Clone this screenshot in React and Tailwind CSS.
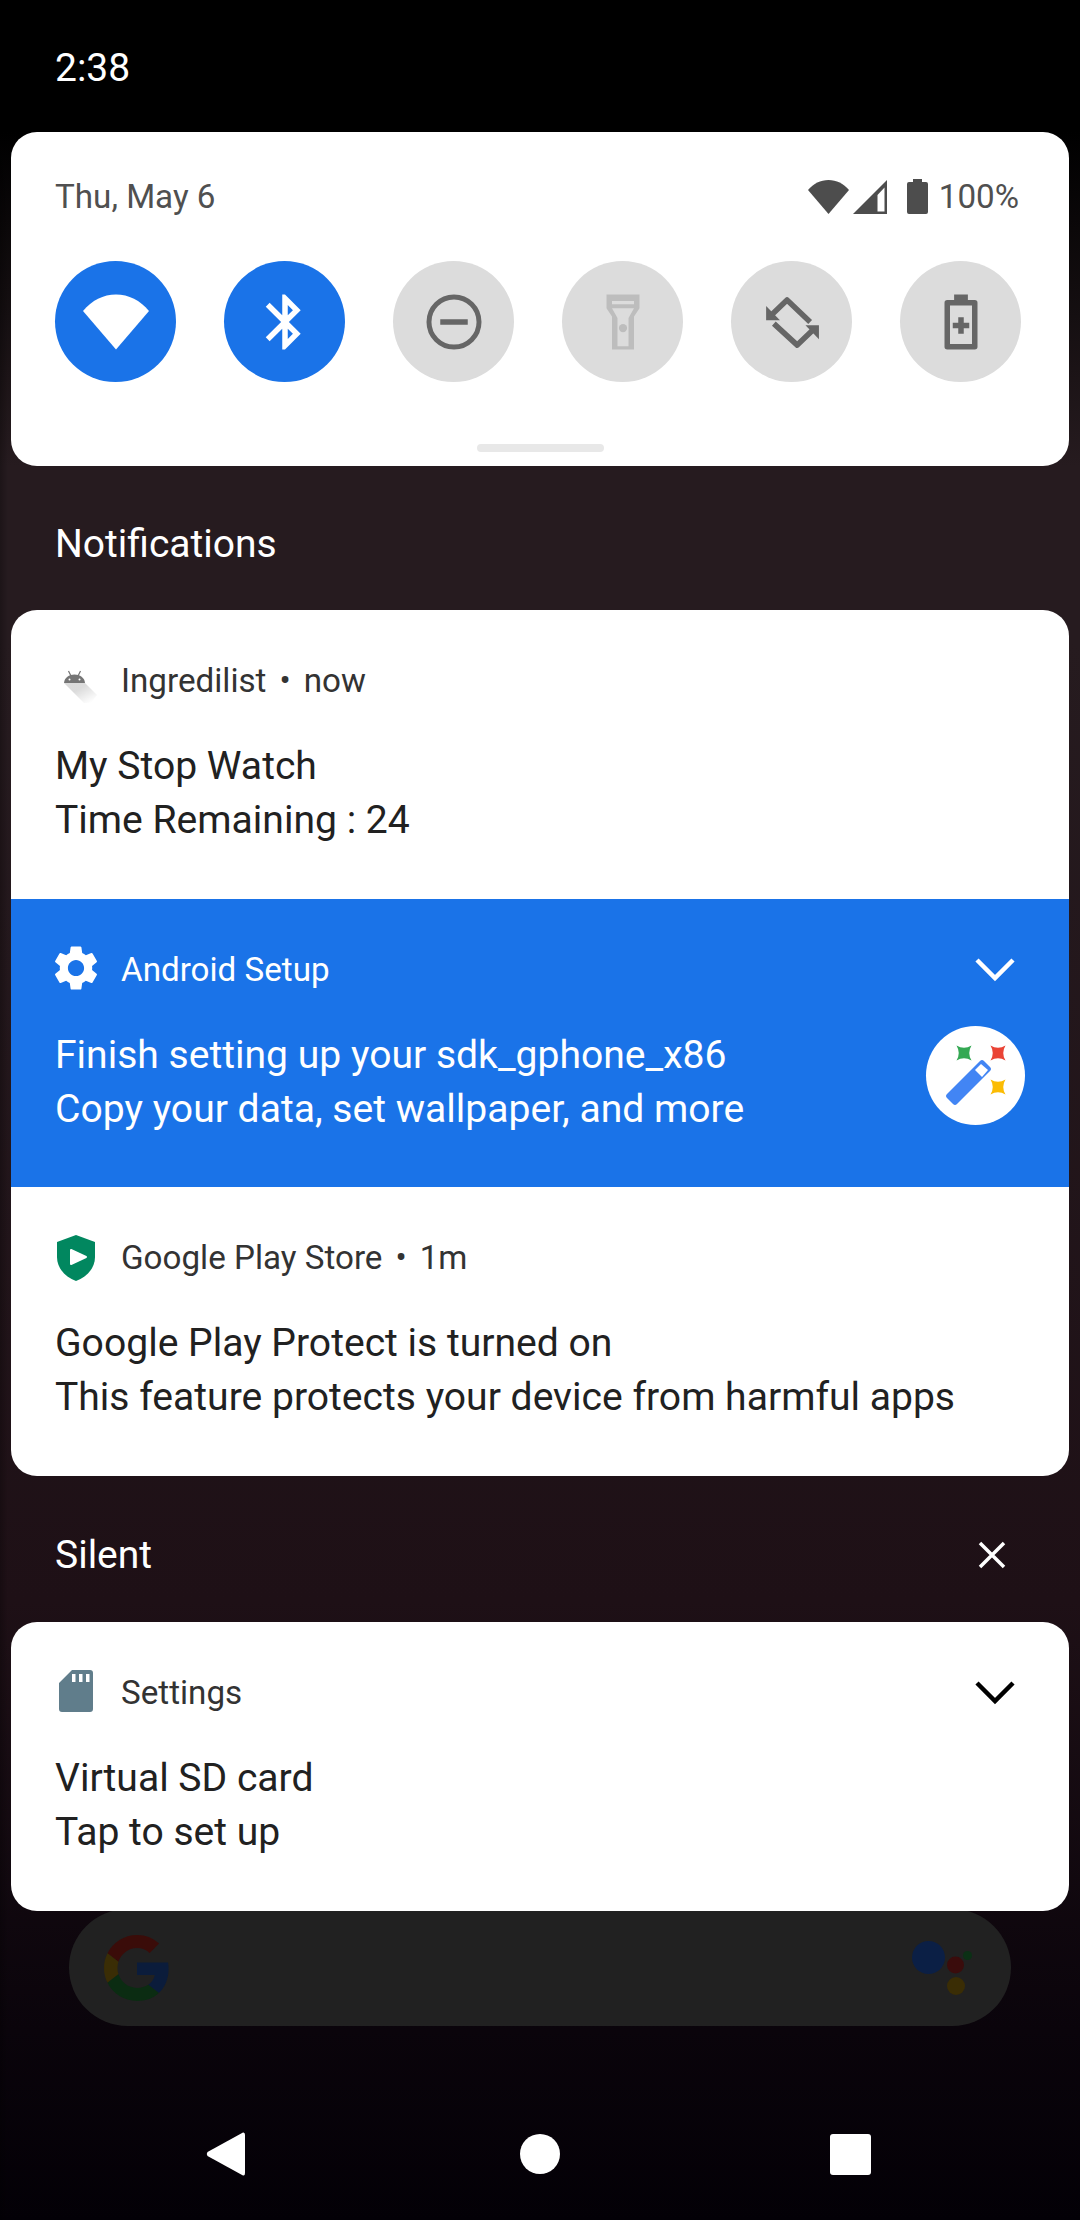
import { useId } from 'react';

function StatusWifi() {
  return (
    <svg width="41" height="34" viewBox="0 0 41 34" className="block">
      <path d="M0 10C5.5 3.5 12.5 0 20.5 0S35.5 3.5 41 10L20.5 34Z" fill="#4d4d4d" />
    </svg>
  );
}

function StatusSignal() {
  return (
    <svg width="34" height="34" viewBox="0 0 34 34" className="block">
      <path fillRule="evenodd" d="M34 0V34H0ZM31.5 7.5 24.5 15V31.5H31.5Z" fill="#4d4d4d" />
    </svg>
  );
}

function StatusBattery() {
  return (
    <svg width="21" height="35" viewBox="0 0 21 35" className="block">
      <path d="M6 0H15V3H19Q21 3 21 5V33Q21 35 19 35H2Q0 35 0 33V5Q0 3 2 3H6Z" fill="#4d4d4d" />
    </svg>
  );
}

function QsButton({ active, children }) {
  return (
    <div
      className={
        active
          ? 'w-[121px] h-[121px] rounded-full bg-[#1a73e8] flex items-center justify-center shrink-0'
          : 'w-[121px] h-[121px] rounded-full bg-[#dcdcdc] flex items-center justify-center shrink-0'
      }
    >
      <svg width="66" height="66" viewBox="0 0 24 24" className="block">
        {children}
      </svg>
    </div>
  );
}

function AndroidIcon() {
  const id = useId();
  return (
    <svg width="44" height="44" viewBox="0 0 44 44" className="block">
      <defs>
        <linearGradient id={id} x1="0.3" y1="0.45" x2="0.8" y2="1">
          <stop offset="0" stopColor="#000" stopOpacity="0.14" />
          <stop offset="1" stopColor="#000" stopOpacity="0" />
        </linearGradient>
      </defs>
      <path d="M9 24H30L42 36 36 44 29 44Z" fill={`url(#${id})`} />
      <path d="M9 24C9.5 18.5 14 15.5 19.5 15.5S29.5 18.5 30 24Z" fill="#757575" />
      <path d="M13.5 12 16 17M25.5 12 23 17" stroke="#757575" strokeWidth="1.2" />
      <circle cx="14.5" cy="20.5" r="1" fill="#fff" />
      <circle cx="24.5" cy="20.5" r="1" fill="#fff" />
    </svg>
  );
}

function Gear() {
  return (
    <svg width="54" height="54" viewBox="0 0 24 24" className="block -ml-[6px] mb-[4px]" fill="#fff">
      <path d="M19.14 12.94c.04-.3.06-.61.06-.94 0-.32-.02-.64-.07-.94l2.03-1.58c.18-.14.23-.41.12-.61l-1.92-3.32c-.12-.22-.37-.29-.59-.22l-2.39.96c-.5-.38-1.03-.7-1.62-.94l-.36-2.54c-.04-.24-.24-.41-.48-.41h-3.84c-.24 0-.43.17-.47.41l-.36 2.54c-.59.24-1.13.57-1.62.94l-2.39-.96c-.22-.08-.47 0-.59.22L2.74 8.87c-.12.21-.08.47.12.61l2.03 1.58c-.05.3-.09.63-.09.94s.02.64.07.94l-2.03 1.58c-.18.14-.23.41-.12.61l1.92 3.32c.12.22.37.29.59.22l2.39-.96c.5.38 1.03.7 1.62.94l.36 2.54c.05.24.24.41.48.41h3.84c.24 0 .44-.17.47-.41l.36-2.54c.59-.24 1.13-.56 1.62-.94l2.39.96c.22.08.47 0 .59-.22l1.92-3.32c.12-.22.07-.47-.12-.61l-2.01-1.58zM12 15.6c-1.98 0-3.6-1.62-3.6-3.6s1.62-3.6 3.6-3.6 3.6 1.62 3.6 3.6-1.62 3.6-3.6 3.6z" />
    </svg>
  );
}

function Shield() {
  return (
    <svg width="38" height="46" viewBox="0 0 38 46" className="block ml-[2px]">
      <path d="M19 0 38 7V22C38 33 30 42 19 46 8 42 0 33 0 22V7Z" fill="#01875f" />
      <path d="M14 15V29L29 22Z" fill="#fff" stroke="#fff" strokeWidth="2" strokeLinejoin="round" />
    </svg>
  );
}

function SdCard() {
  return (
    <svg width="34" height="42" viewBox="0 0 34 42" className="block ml-[4px] mb-[4px]">
      <path
        fillRule="evenodd"
        d="M13 0H31Q34 0 34 3V39Q34 42 31 42H3Q0 42 0 39V13ZM13 4V12H16.5V4ZM20 4V12H23.5V4ZM27 4V12H30.5V4Z"
        fill="#607d8b"
      />
    </svg>
  );
}

function Chevron({ color }) {
  return (
    <svg width="42" height="26" viewBox="0 0 42 26" className="block">
      <path d="M3 3 21 21 39 3" fill="none" stroke={color} strokeWidth="4.5" />
    </svg>
  );
}

function Star({ x, y, color }) {
  // four point sparkle, drawn round its centre
  return (
    <path
      transform={`translate(${x} ${y})`}
      d="M-7.5 -7.5Q0 -3 7.5 -7.5 3 0 7.5 7.5 0 3 -7.5 7.5-3 0-7.5 -7.5Z"
      fill={color}
    />
  );
}

function SetupWizard() {
  return (
    <div className="w-[99px] h-[99px] rounded-full bg-white shrink-0">
      <svg width="99" height="99" viewBox="0 0 99 99" className="block">
        <Star x="38" y="27" color="#34a853" />
        <Star x="72" y="27" color="#ea4335" />
        <Star x="72" y="61" color="#fbbc04" />
        <path d="M21 68 54 35Q56 33 58 35L64 41Q66 43 64 45L31 78Q29 80 27 78L21 72Q19 70 21 68Z" fill="#4285f4" />
        <path d="M49 44 55 38 62 44 56 51Z" fill="#fff" />
      </svg>
    </div>
  );
}

function Notification({ icon, app, time, title, text, blue, chevron, side, rounded }) {
  return (
    <div className={blue ? 'h-[288px] bg-[#1a73e8] pl-[44px] pr-[40px] pt-[43px]' : `h-[289px] bg-white pl-[44px] pr-[40px] pt-[43px] ${rounded}`}>
      <div className="h-[56px] flex items-center">
        <div className="w-[66px] shrink-0 flex">{icon}</div>
        <span className={blue ? 'text-[33.2px] text-white' : 'text-[33.2px] text-[#333333]'}>{app}</span>
        {time && <span className="text-[33.2px] text-[#333333] mx-[13px]">•</span>}
        {time && <span className="text-[33.2px] text-[#333333]">{time}</span>}
        {chevron && <div className="ml-auto mr-[13px]">{chevron}</div>}
      </div>
      <div className="flex justify-between items-start mt-[30px]">
        <div className={blue ? 'text-[39.1px] leading-[54px] text-white' : 'text-[39.1px] leading-[54px] text-[#212121]'}>
          <div>{title}</div>
          <div>{text}</div>
        </div>
        {side && <div className="mr-[4px] -mt-[2px]">{side}</div>}
      </div>
    </div>
  );
}

function GoogleG() {
  return (
    <svg width="66" height="66" viewBox="0 0 48 48" className="block">
      <path fill="#3a0c09" d="M24 9.5c3.54 0 6.71 1.22 9.21 3.6l6.85-6.85C35.9 2.38 30.47 0 24 0 14.62 0 6.51 5.38 2.56 13.22l7.98 6.19C12.43 13.72 17.74 9.5 24 9.5z" />
      <path fill="#0b1c3b" d="M46.98 24.55c0-1.57-.15-3.09-.38-4.55H24v9.02h12.94c-.58 2.96-2.26 5.48-4.78 7.18l7.73 6c4.51-4.18 7.09-10.36 7.09-17.65z" />
      <path fill="#3a2d05" d="M10.53 28.59c-.48-1.45-.76-2.99-.76-4.59s.27-3.14.76-4.59l-7.98-6.19C.92 16.46 0 20.12 0 24c0 3.88.92 7.54 2.56 10.78l7.97-6.19z" />
      <path fill="#0b2c12" d="M24 48c6.48 0 11.93-2.13 15.89-5.81l-7.73-6c-2.15 1.45-4.92 2.3-8.16 2.3-6.26 0-11.57-4.22-13.47-9.91l-7.98 6.19C6.51 42.62 14.62 48 24 48z" />
    </svg>
  );
}

function Assistant() {
  return (
    <svg width="60" height="54" viewBox="0 0 60 54" className="block">
      <circle cx="16.5" cy="16.5" r="16.5" fill="#0b1f45" />
      <circle cx="43.5" cy="24" r="8.5" fill="#3a0c0c" />
      <circle cx="44" cy="45" r="9" fill="#3a2d05" />
      <circle cx="55.5" cy="14.5" r="4.5" fill="#0b3015" />
    </svg>
  );
}

export default function App() {
  return (
    <div className='font-["Roboto",sans-serif] w-[1080px] h-[2220px] overflow-hidden flex flex-col bg-[linear-gradient(90deg,#00000040_0px,#00000000_8px),linear-gradient(180deg,#000000_0px,#000000_132px,#261b1f_466px,#261b1f_640px,#1e1016_1600px,#0a040b_2030px,#030006_2220px)]'>
      {/* status bar */}
      <div className="h-[132px] pl-[55px] pt-[44px] text-white text-[39px] leading-[48px] shrink-0">2:38</div>

      {/* quick settings */}
      <div className="mx-[11px] h-[334px] bg-white rounded-[26px] px-[44px] pt-[37px] shrink-0 flex flex-col">
        <div className="flex items-center justify-between h-[56px]">
          <span className="text-[33.2px] text-[#505050]">Thu, May 6</span>
          <div className="flex items-center mr-[6px]">
            <StatusWifi />
            <div className="ml-[4px]"><StatusSignal /></div>
            <div className="ml-[20px]"><StatusBattery /></div>
            <span className="ml-[11px] text-[33.2px] text-[#505050]">100%</span>
          </div>
        </div>
        <div className="flex gap-[48px] mt-[36px]">
          <QsButton active>
            <path d="M0 8C3.2 4.1 7.4 2 12 2S20.8 4.1 24 8L12 22Z" fill="#fff" />
          </QsButton>
          <QsButton active>
            <path fill="#fff" d="M17.71 7.71L12 2h-1v7.59L6.41 5 5 6.41 10.59 12 5 17.59 6.41 19 11 14.41V22h1l5.71-5.71-4.3-4.29 4.3-4.29zM13 5.83l1.88 1.88L13 9.59V5.83zm1.88 10.46L13 18.17v-3.76l1.88 1.88z" />
          </QsButton>
          <QsButton>
            <circle cx="12" cy="12" r="9.1" fill="none" stroke="#666" strokeWidth="1.8" />
            <path d="M7 11H17V13H7Z" fill="#666" />
          </QsButton>
          <QsButton>
            <path fillRule="evenodd" fill="#bdbdbd" d="M6 2H18V7L16 10V22H8V10L6 7ZM8 4.4V5.5H16V4.4ZM8 7 10 10.5V20.8H14V10.5L16 7Z" />
            <circle cx="12" cy="14.2" r="1.5" fill="#bdbdbd" />
          </QsButton>
          <QsButton>
            <path d="M2.6 11.4V6.2L7.6 11.4Z" fill="#666" />
            <path d="M5 9 10.2 4 18.6 12" fill="none" stroke="#666" strokeWidth="2" strokeLinejoin="round" />
            <path d="M21.8 13.2V18.3L16.9 13.2Z" fill="#666" />
            <path d="M19.5 15 13.9 20.4 5.4 12.6" fill="none" stroke="#666" strokeWidth="2" strokeLinejoin="round" />
          </QsButton>
          <QsButton>
            <path d="M9.5 2H14.5V4H17Q18 4 18 5V21Q18 22 17 22H7Q6 22 6 21V5Q6 4 7 4H9.5ZM8 6V20H16V6Z" fill="#666" fillRule="evenodd" />
            <path d="M11 10.3H13V12.3H15V14.3H13V16.3H11V14.3H9V12.3H11Z" fill="#666" />
          </QsButton>
        </div>
        <div className="w-[127px] h-[8px] rounded-full bg-[#e8e8e8] mx-auto mt-[62px]" />
      </div>

      {/* notifications header */}
      <div className="h-[144px] pl-[55px] pt-[54px] text-white text-[39px] leading-[48px] shrink-0">Notifications</div>

      <div className="mx-[11px] shrink-0">
        <Notification
          rounded="rounded-t-[26px]"
          icon={<AndroidIcon />}
          app="Ingredilist"
          time="now"
          title="My Stop Watch"
          text="Time Remaining : 24"
        />
        <Notification
          blue
          icon={<Gear />}
          app="Android Setup"
          title="Finish setting up your sdk_gphone_x86"
          text="Copy your data, set wallpaper, and more"
          chevron={<Chevron color="#fff" />}
          side={<SetupWizard />}
        />
        <Notification
          rounded="rounded-b-[26px]"
          icon={<Shield />}
          app="Google Play Store"
          time="1m"
          title="Google Play Protect is turned on"
          text="This feature protects your device from harmful apps"
        />
      </div>

      {/* silent header */}
      <div className="h-[146px] pl-[55px] pr-[74px] pt-[12px] flex items-center justify-between text-white text-[39px] shrink-0">
        <span>Silent</span>
        <svg width="28" height="28" viewBox="0 0 28 28" className="block">
          <path d="M2 2 26 26M26 2 2 26" stroke="#fff" strokeWidth="3.5" />
        </svg>
      </div>

      <div className="mx-[11px] shrink-0 relative z-10">
        <Notification
          rounded="rounded-[26px]"
          icon={<SdCard />}
          app="Settings"
          title="Virtual SD card"
          text="Tap to set up"
          chevron={<Chevron color="#000" />}
        />
      </div>

      {/* search bar behind the shade */}
      <div className="mx-[69px] h-[117px] -mt-[2px] rounded-full bg-[#212121] shrink-0 flex items-center justify-between pl-[35px] pr-[39px]">
        <GoogleG />
        <Assistant />
      </div>

      {/* navigation bar */}
      <div className="flex items-start pt-[106px]">
        <div className="w-[245px] pl-[206px] shrink-0">
          <svg width="39" height="44" viewBox="0 0 39 44" className="block">
            <path d="M37 0.5Q39 0 39 3V41Q39 44 37 43.5L1.5 24Q0 22 1.5 20Z" fill="#fff" />
          </svg>
        </div>
        <div className="w-[40px] h-[40px] rounded-full bg-white ml-[275px] mt-[2px] shrink-0" />
        <div className="w-[41px] h-[41px] rounded-[3px] bg-white ml-[270px] mt-[2px] shrink-0" />
      </div>
    </div>
  );
}
